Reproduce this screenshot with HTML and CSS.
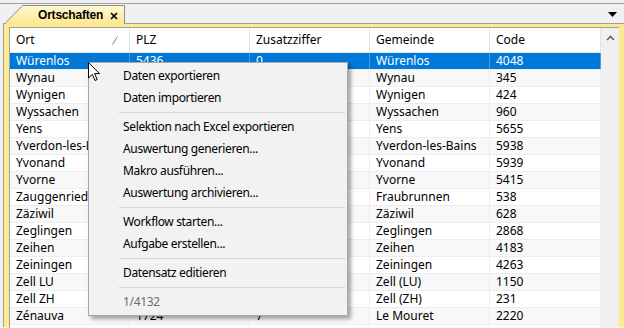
FILE: index.html
```html
<!DOCTYPE html>
<html lang="de">
<head>
    <meta charset="UTF-8">
    <title>Ortschaften</title>
    <link rel="stylesheet" href="styles.css">
</head>
<body>
    <div class="tabstrip">
        <div class="tab">
            <svg class="tab-shape" width="121" height="19" viewBox="0 0 121 19">
                <defs>
                    <linearGradient id="tabfill" x1="0" y1="0" x2="0" y2="1">
                        <stop offset="0" stop-color="#fff7d6"/>
                        <stop offset="1" stop-color="#fde88e"/>
                    </linearGradient>
                </defs>
                <path d="M0 19 L17.5 0.5 H119.5 V19 Z" fill="url(#tabfill)"/>
                <path d="M0 18.5 L17.5 0.5 H119.5 V19" fill="none" stroke="#8e8e8e"/>
            </svg>
            <span class="tab-title">Ortschaften</span>
            <svg class="tab-close" width="8" height="8" viewBox="0 0 8 8">
                <path d="M1 1 L7 7 M7 1 L1 7" stroke="#000" stroke-width="1.7"/>
            </svg>
        </div>
        <svg class="tab-list" width="9" height="5" viewBox="0 0 9 5">
            <path d="M0 0 H9 L4.5 5 Z" fill="#000"/>
        </svg>
    </div>

    <div class="frame">
        <div class="grid">
            <div class="list">
                <div class="row head">
                    <div class="cell">Ort
                        <svg class="sort" width="6" height="9" viewBox="0 0 6 9"><path d="M0.5 8.5 L5.5 0.5" stroke="#7a7a7a"/></svg>
                    </div>
                    <div class="cell">PLZ</div>
                    <div class="cell">Zusatzziffer</div>
                    <div class="cell">Gemeinde</div>
                    <div class="cell">Code</div>
                </div>
                <div class="row selected"><div class="cell">Würenlos</div><div class="cell">5436</div><div class="cell">0</div><div class="cell">Würenlos</div><div class="cell">4048</div></div>
                <div class="row"><div class="cell">Wynau</div><div class="cell">4923</div><div class="cell">0</div><div class="cell">Wynau</div><div class="cell">345</div></div>
                <div class="row"><div class="cell">Wynigen</div><div class="cell">3472</div><div class="cell">0</div><div class="cell">Wynigen</div><div class="cell">424</div></div>
                <div class="row"><div class="cell">Wyssachen</div><div class="cell">4954</div><div class="cell">0</div><div class="cell">Wyssachen</div><div class="cell">960</div></div>
                <div class="row"><div class="cell">Yens</div><div class="cell">1169</div><div class="cell">0</div><div class="cell">Yens</div><div class="cell">5655</div></div>
                <div class="row"><div class="cell">Yverdon-les-Bains</div><div class="cell">1400</div><div class="cell">0</div><div class="cell">Yverdon-les-Bains</div><div class="cell">5938</div></div>
                <div class="row"><div class="cell">Yvonand</div><div class="cell">1462</div><div class="cell">0</div><div class="cell">Yvonand</div><div class="cell">5939</div></div>
                <div class="row"><div class="cell">Yvorne</div><div class="cell">1853</div><div class="cell">0</div><div class="cell">Yvorne</div><div class="cell">5415</div></div>
                <div class="row"><div class="cell">Zauggenried</div><div class="cell">3309</div><div class="cell">0</div><div class="cell">Fraubrunnen</div><div class="cell">538</div></div>
                <div class="row"><div class="cell">Zäziwil</div><div class="cell">3532</div><div class="cell">0</div><div class="cell">Zäziwil</div><div class="cell">628</div></div>
                <div class="row"><div class="cell">Zeglingen</div><div class="cell">4495</div><div class="cell">0</div><div class="cell">Zeglingen</div><div class="cell">2868</div></div>
                <div class="row"><div class="cell">Zeihen</div><div class="cell">5079</div><div class="cell">0</div><div class="cell">Zeihen</div><div class="cell">4183</div></div>
                <div class="row"><div class="cell">Zeiningen</div><div class="cell">4314</div><div class="cell">0</div><div class="cell">Zeiningen</div><div class="cell">4263</div></div>
                <div class="row"><div class="cell">Zell LU</div><div class="cell">6144</div><div class="cell">0</div><div class="cell">Zell (LU)</div><div class="cell">1150</div></div>
                <div class="row"><div class="cell">Zell ZH</div><div class="cell">8487</div><div class="cell">0</div><div class="cell">Zell (ZH)</div><div class="cell">231</div></div>
                <div class="row"><div class="cell">Zénauva</div><div class="cell">1724</div><div class="cell">7</div><div class="cell">Le Mouret</div><div class="cell">2220</div></div>
                <div class="row"><div class="cell"></div><div class="cell"></div><div class="cell"></div><div class="cell"></div><div class="cell"></div></div>
            </div>
            <div class="vscroll">
                <svg width="9" height="6" viewBox="0 0 9 6"><path d="M1 5 L4.5 1.5 L8 5" fill="none" stroke="#606060" stroke-width="1.6"/></svg>
            </div>
        </div>
    </div>

    <ul class="context-menu">
        <li>Daten exportieren</li>
        <li>Daten importieren</li>
        <li class="sep"></li>
        <li>Selektion nach Excel exportieren</li>
        <li>Auswertung generieren...</li>
        <li>Makro ausführen...</li>
        <li>Auswertung archivieren...</li>
        <li class="sep"></li>
        <li>Workflow starten...</li>
        <li>Aufgabe erstellen...</li>
        <li class="sep"></li>
        <li>Datensatz editieren</li>
        <li class="sep"></li>
        <li class="disabled">1/4132</li>
    </ul>

    <!-- mouse pointer -->
    <svg class="cursor" width="13" height="20" viewBox="0 0 13 20">
        <path d="M0.5 0.5 V16 L4.3 12.4 L7 18.5 L9.2 17.5 L6.6 11.6 H11.5 Z" fill="#fff" stroke="#000" stroke-linejoin="round"/>
    </svg>
</body>
</html>
```

FILE: styles.css
```css
body {
    margin: 0;
    background-color: #f0f0f0;
    font-family: "Noto Sans", sans-serif;
    font-size: 12px;
    color: #000;
    height: 328px;
    overflow: hidden;
}
.tabstrip {
    margin-top: 3px;
    height: 19px;
    border-top: 1px solid #a0a0a0;
    display: flex;
    align-items: flex-end;
}
.tab {
    position: relative;
    z-index: 1;
    width: 121px;
    height: 19px;
    margin-left: 5px;
    margin-bottom: -1px;
    display: flex;
    align-items: center;
}
.tab-shape {
    position: absolute;
    left: 0;
    top: 0;
}
.tab-title {
    position: relative;
    margin-left: 33px;
    font-family: "Liberation Sans", Arial, sans-serif;
    font-weight: bold;
    letter-spacing: -0.2px;
    white-space: nowrap;
}
.tab-close {
    position: relative;
    flex-shrink: 0;
    margin-left: auto;
    margin-right: 8px;
    margin-top: 2px;
}
.tab-list {
    margin-left: auto;
    margin-right: 7px;
    margin-bottom: 6px;
}
.frame {
    margin-left: 3px;
    border-left: 1px solid #a0a0a0;
    border-top: 1px solid #a0a0a0;
    background-color: #fde98f;
    padding: 3px 5px 0 5px;
    height: 300px;
}
.grid {
    display: flex;
    height: 100%;
    border-left: 1px solid #a0a0a0;
    border-top: 1px solid #a0a0a0;
    background-color: #fff;
}
.list {
    width: 591px;
    overflow: hidden;
}
.row {
    display: grid;
    grid-template-columns: 120px 120px 120px 120px 111px;
    height: 17px;
    box-sizing: border-box;
    border-bottom: 1px solid #ededed;
    line-height: 16px;
}
.row:nth-child(odd) {
    background-color: #f8f8f8;
}
.row.head {
    height: 25px;
    line-height: 24px;
    background-color: #fff;
    border-bottom: 1px solid #e3e3e3;
}
.row.selected {
    background-color: #0078d7;
    color: #fff;
}
.cell {
    padding-left: 6px;
    border-right: 1px solid #ededed;
    white-space: nowrap;
    overflow: hidden;
    display: flex;
    align-items: center;
}
.head .cell {
    border-right-color: #e3e3e3;
}
.selected .cell {
    border-right-color: #4a9ce0;
}
.sort {
    margin-left: auto;
    margin-right: 11px;
    margin-top: 1px;
}
.vscroll {
    width: 18px;
    background-color: #f0f0f0;
    display: flex;
    justify-content: center;
    align-items: flex-start;
    padding-top: 7px;
    box-sizing: border-box;
}
.context-menu {
    position: absolute;
    left: 88px;
    top: 62px;
    width: 260px;
    box-sizing: border-box;
    margin: 0;
    padding: 2px 0;
    list-style: none;
    background-color: #f2f2f2;
    border: 1px solid #a8a8a8;
    box-shadow: 3px 3px 4px rgba(0, 0, 0, 0.35);
}
.context-menu li {
    height: 22px;
    line-height: 22px;
    padding-left: 34px;
    white-space: nowrap;
    letter-spacing: -0.35px;
}
.context-menu li.sep {
    height: 7px;
    padding: 0;
    margin: 0 2px 0 30px;
    position: relative;
}
.context-menu li.sep::after {
    content: "";
    position: absolute;
    left: 0;
    right: 0;
    top: 3px;
    border-top: 1px solid #d4d4d4;
}
.context-menu li.disabled {
    color: #6d6d6d;
}
.cursor {
    position: absolute;
    left: 88px;
    top: 62px;
    z-index: 5;
}
```
